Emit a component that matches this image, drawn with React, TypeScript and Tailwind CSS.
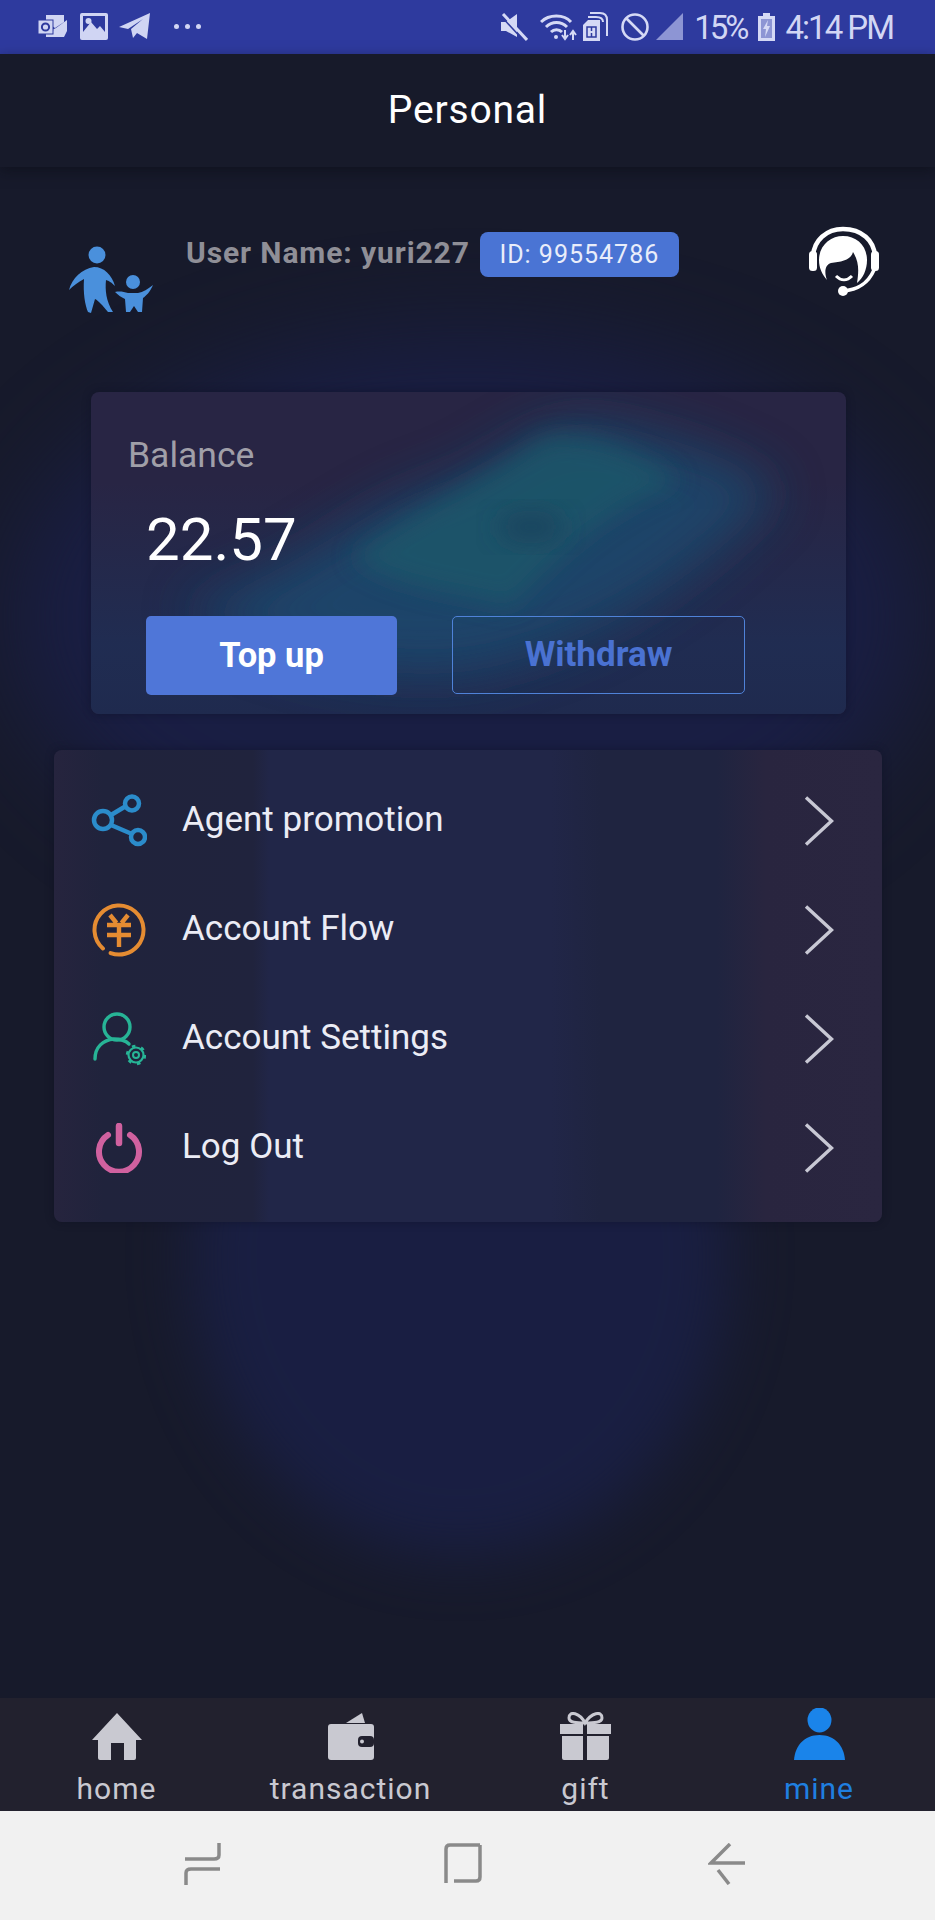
import React from "react";

const Chevron = () => (
  <svg width="30" height="50" viewBox="0 0 30 50" fill="none" stroke="#c8c8d4" strokeWidth="3.4">
    <path d="M2 1.5 L27.5 25 L2 48.5" />
  </svg>
);

const ShareIcon = () => (
  <svg width="56" height="54" viewBox="0 0 56 54" fill="none" stroke="#2b8ccb" strokeWidth="4.5">
    <circle cx="12" cy="26" r="9" />
    <circle cx="41" cy="9.5" r="7" />
    <circle cx="47" cy="43" r="7" />
    <path d="M20 21 L35 12 M20 31 L41 40" />
  </svg>
);

const YenIcon = () => (
  <svg width="54" height="54" viewBox="0 0 54 54" fill="none" stroke="#e58c32" strokeWidth="4">
    <circle cx="27" cy="27" r="24.5" strokeDasharray="144 10" transform="rotate(131 27 27)" strokeLinecap="round" />
    <path d="M18 12 L24.5 20 M36 12 L29.5 20 M15 22 H39 M15 32 H39 M27 22 V44" strokeWidth="4.4" />
  </svg>
);

const UserGearIcon = () => (
  <svg width="54" height="54" viewBox="0 0 54 54" fill="none" stroke="#27b496" strokeWidth="3.4">
    <circle cx="25" cy="15" r="13" />
    <path d="M3 47 C3 35 11 28 22 27 C28 27 33 28 37 32" strokeLinecap="round" />
    <circle cx="44" cy="43" r="7.5" strokeWidth="2.2" />
    <circle cx="44" cy="43" r="9" strokeWidth="2.4" strokeDasharray="3.5 6" />
    <circle cx="44" cy="43" r="3" strokeWidth="2" />
  </svg>
);

const PowerIcon = () => (
  <svg width="48" height="50" viewBox="0 0 48 50" fill="none" stroke="#d0619f" strokeWidth="6">
    <path d="M13 12 A20 20 0 1 0 35 12" strokeLinecap="round" />
    <path d="M24 3 V20" strokeWidth="6.5" strokeLinecap="round" />
  </svg>
);

const Family = () => (
  <svg width="86" height="70" viewBox="0 0 86 70" fill="#4a90dc">
    <circle cx="29" cy="10" r="8.5" />
    <path d="M1 45 C4 33 14 24 26 22 C36 22 44 30 47 41 C43 37 41 36 38 35 C37 45 38 56 45 67 L40 67 C34 60 31 56 27 54 L23 68 L20 67 C17 60 15 48 16 34 C10 37 5 41 1 45 Z" />
    <circle cx="65" cy="37" r="7" />
    <path d="M47 47 C52 46 56 47 60 48 L70 48 C75 47 80 44 85 40 C82 47 78 51 75 53 L74 67 L70 67 L66 61 L62 67 L58 67 L57 54 C53 52 50 50 47 47 Z" />
  </svg>
);

const Support = () => (
  <svg width="72" height="72" viewBox="17 16 72 72" fill="none">
    <path d="M22 48 C22 30 36 19 52 19 C70 19 84 30 84 48" stroke="#fff" strokeWidth="4.5" />
    <rect x="18" y="41" width="8" height="20" rx="3.5" fill="#fff" />
    <rect x="80" y="41" width="8" height="20" rx="3.5" fill="#fff" />
    <path d="M28 50 C28 35 40 26 52 26 C66 26 76 36 76 50 C76 60 72 68 66 73 C68 60 68 52 62 42 C60 50 50 52 40 53 C34 55 33 62 36 70 C31 64 28 58 28 50 Z" fill="#fff" />
    <path d="M45 66 C50 71 56 71 61 66" stroke="#fff" strokeWidth="3" />
    <path d="M83 60 C76 76 64 80 52 81" stroke="#fff" strokeWidth="3.5" />
    <circle cx="52" cy="81" r="5" fill="#fff" />
  </svg>
);

const BarIcons = {
  outlook: (
    <svg width="31" height="24" viewBox="0 0 31 24">
      <path d="M9 1 H27 V8 L18 14 L9 8 Z M15 16 L19 17 L25 13 L30 17 V6 L19 14 Z" fill="#d0d5f3" />
      <path d="M14 17 L19 15.5 L27 9 L30 7 V17 L27 23 H9 V20 H14 Z" fill="#d0d5f3" />
      <rect x="1" y="6" width="15" height="14" fill="#d0d5f3" stroke="#2e3a9e" strokeWidth="1" />
      <circle cx="8.5" cy="13" r="3.6" fill="none" stroke="#2e3a9e" strokeWidth="2" />
    </svg>
  ),
  image: (
    <svg width="28" height="27" viewBox="0 0 28 27">
      <rect width="28" height="27" rx="2" fill="#d0d5f3" />
      <rect x="3" y="3" width="22" height="21" fill="#2e3a9e" />
      <path d="M3 24 V19 L11 9 L17 16 L20 13 L25 19 V24 Z" fill="#d0d5f3" />
      <circle cx="8.5" cy="8" r="3" fill="#d0d5f3" />
    </svg>
  ),
  telegram: (
    <svg width="32" height="28" viewBox="0 0 32 28" fill="#d0d5f3">
      <path d="M0 15 L31 1 L28 27 L18 21 L14 26 L12 17 L24 7 L9 17 Z" />
    </svg>
  ),
  mute: (
    <svg width="28" height="28" viewBox="0 0 28 28" fill="#d5d9f5">
      <path d="M1 9 H6 L17 1 V24 L6 18 H1 Z" />
      <path d="M3 1 L27 27" stroke="#d5d9f5" strokeWidth="3" />
      <path d="M0 2 L24 28" stroke="#2e3a9e" strokeWidth="1.5" />
    </svg>
  ),
  wifi: (
    <svg width="38" height="28" viewBox="0 0 38 28" fill="none" stroke="#d5d9f5" strokeWidth="3">
      <path d="M1 9 C9 1 24 1 31 9 M6 14 C12 8 21 8 27 14 M11 19 C14 16 19 16 22 19" />
      <circle cx="16" cy="24" r="2" fill="#d5d9f5" stroke="none" />
      <path d="M25 17 V25 M22 22 L25 26 L28 22 M33 27 V19 M30 22 L33 18 L36 22" strokeWidth="2" />
    </svg>
  ),
  sim: (
    <svg width="26" height="30" viewBox="0 0 26 30" fill="#d5d9f5">
      <path d="M8 1 H18 C23 1 25 4 25 8 V24" fill="none" stroke="#d5d9f5" strokeWidth="2" />
      <path d="M6 5 H14 C19 5 21 7 21 10" fill="none" stroke="#d5d9f5" strokeWidth="2" />
      <path d="M6 8 H18 V29 H1 V13 Z" />
      <rect x="5" y="15" width="9" height="10" fill="none" stroke="#2e3a9e" strokeWidth="1.5" />
      <path d="M9.5 15 V19 M9.5 21 V25" stroke="#2e3a9e" strokeWidth="1.5" />
    </svg>
  ),
  ban: (
    <svg width="28" height="28" viewBox="0 0 28 28" fill="none" stroke="#d5d9f5" strokeWidth="2.6">
      <circle cx="14" cy="14" r="12.5" />
      <path d="M5 5 L23 23" />
    </svg>
  ),
  signal: (
    <svg width="27" height="28" viewBox="0 0 27 28">
      <path d="M0 27 L27 0 V27 Z" fill="#8d95d4" />
    </svg>
  ),
  battery: (
    <svg width="19" height="28" viewBox="0 0 19 28">
      <path d="M6 0 H13 V3 H18 V28 H1 V3 H6 Z" fill="#d5d9f5" />
      <path d="M4 6 H15 V25 H4 Z" fill="#8d95d4" />
      <path d="M11 7 L6 16 H9 L8 24 L13 13 H10 Z" fill="#d5d9f5" />
    </svg>
  ),
};

const menu = [
  { label: "Agent promotion", icon: <ShareIcon /> },
  { label: "Account Flow", icon: <YenIcon /> },
  { label: "Account Settings", icon: <UserGearIcon /> },
  { label: "Log Out", icon: <PowerIcon /> },
];

const HomeIcon = () => (
  <svg width="50" height="47" viewBox="0 0 50 47" fill="#c9c9d1">
    <path d="M25 0 L50 27 L44 27 V45 Q44 47 42 47 H32 V30 H19 V47 H8 Q6 47 6 45 V27 H0 Z" />
  </svg>
);
const WalletIcon = () => (
  <svg width="46" height="47" viewBox="0 0 46 47">
    <path d="M18 10 L34 0 L37 10 Z" fill="#c9c9d1" />
    <rect y="11" width="46" height="36" rx="3" fill="#c9c9d1" />
    <rect x="30" y="23" width="16" height="11" rx="4" fill="#22212e" />
    <circle cx="34" cy="28.5" r="2" fill="#c9c9d1" />
  </svg>
);
const GiftIcon = () => (
  <svg width="51" height="48" viewBox="0 0 51 48" fill="#c9c9d1">
    <path d="M25 11 C20 1 9 -2 9 6 C9 11 17 11 25 11 C33 11 42 11 42 6 C42 -2 31 1 25 11 Z" fill="none" stroke="#c9c9d1" strokeWidth="3" />
    <path d="M0 12 H23 V22 H0 Z M27 12 H51 V22 H27 Z" />
    <path d="M2 24 H23 V48 H4 Q2 48 2 46 Z M27 24 H49 V46 Q49 48 47 48 H27 Z" />
  </svg>
);
const MineIcon = () => (
  <svg width="51" height="52" viewBox="0 0 51 52" fill="#1a84ea">
    <ellipse cx="25.5" cy="12" rx="12" ry="12.5" />
    <path d="M0 52 C1 38 10 27 25.5 27 C41 27 50 38 51 52 Z" />
  </svg>
);

const nav = [
  { label: "home", icon: <HomeIcon />, active: false },
  { label: "transaction", icon: <WalletIcon />, active: false },
  { label: "gift", icon: <GiftIcon />, active: false },
  { label: "mine", icon: <MineIcon />, active: true },
];

export default function App() {
  return (
    <div className="w-[935px] h-[1920px] flex flex-col overflow-hidden bg-[#171a2b] font-[family-name:Roboto,sans-serif]">
      <div className="h-[54px] shrink-0 bg-[#2e3a9e] flex items-center text-[#d2d6f4]">
        <div className="ml-[37px] mt-[-2px] flex items-center">
          {BarIcons.outlook}
          <div className="ml-[12px]">{BarIcons.image}</div>
          <div className="ml-[11px]">{BarIcons.telegram}</div>
          <div className="ml-[23px] flex gap-[6px]">
            <span className="w-[5px] h-[5px] rounded-full bg-[#d2d6f4]" />
            <span className="w-[5px] h-[5px] rounded-full bg-[#d2d6f4]" />
            <span className="w-[5px] h-[5px] rounded-full bg-[#d2d6f4]" />
          </div>
        </div>
        <div className="ml-auto mr-[42px] flex items-center">
          {BarIcons.mute}
          <div className="ml-[12px]">{BarIcons.wifi}</div>
          <div className="ml-[4px]">{BarIcons.sim}</div>
          <div className="ml-[13px]">{BarIcons.ban}</div>
          <div className="ml-[7px]">{BarIcons.signal}</div>
          <span className="ml-[11px] text-[33px] leading-none tracking-[-3px]">15%</span>
          <div className="ml-[10px]">{BarIcons.battery}</div>
          <span className="ml-[10px] text-[33px] leading-none tracking-[-2px]">4:14 PM</span>
        </div>
      </div>

      <div className="relative z-10 h-[113px] shrink-0 bg-[#171a2a] flex items-center justify-center text-white text-[39px] tracking-[0.8px] shadow-[0_4px_12px_rgba(10,12,20,0.5)]">
        Personal
      </div>

      <main className="relative flex-1 overflow-hidden">
        <div className="absolute left-[190px] top-[790px] w-[540px] h-[600px] rounded-[50%] bg-[#1a2048] blur-[30px] opacity-80" />
        <div className="absolute left-[10px] top-[170px] w-[915px] h-[560px] rounded-[50%] bg-[#1a1f4a] blur-[50px] opacity-80" />

        <div className="relative flex items-start pl-[68px] pr-[55px] pt-[59px]">
          <div className="mt-[19px]"><Family /></div>
          <div className="ml-[32px] flex items-center gap-[10px] mt-[6px]">
            <span className="mt-[-4px] text-[30px] font-bold tracking-[0.9px] text-[#8f8f97]">User Name: yuri227</span>
            <span className="h-[45px] w-[199px] rounded-[8px] bg-[#4a74d4] text-[#e9edfa] text-[25px] tracking-[1px] flex items-center justify-center">ID: 99554786</span>
          </div>
          <div className="ml-auto"><Support /></div>
        </div>

        <section className="relative overflow-hidden ml-[91px] mt-[77px] w-[755px] h-[322px] rounded-[8px] bg-[#282544] shadow-[0_0_8px_rgba(10,12,30,0.4)]">
          <svg className="absolute inset-0" width="755" height="322" viewBox="0 0 755 322" fill="none">
            <defs>
              <filter id="b1" x="-30%" y="-30%" width="160%" height="160%"><feGaussianBlur stdDeviation="26" /></filter>
              <filter id="b2" x="-30%" y="-30%" width="160%" height="160%"><feGaussianBlur stdDeviation="12" /></filter>
              <linearGradient id="bot" x1="0" y1="0" x2="0" y2="1"><stop offset="0" stopColor="#1e2e55" stopOpacity="0" /><stop offset="0.7" stopColor="#1e2e55" stopOpacity="0.8" /><stop offset="1" stopColor="#1f2a4e" /></linearGradient>
            </defs>
            <rect y="90" width="755" height="232" fill="url(#bot)" />
            <path d="M90 215 C200 190 260 120 340 95 C400 80 440 25 500 30 C570 40 660 70 690 100 C620 170 530 250 380 280 C280 290 170 265 90 215 Z" fill="#1c4a6e" filter="url(#b1)" opacity="0.85" />
            <path d="M260 165 C330 110 400 85 450 45 C500 35 560 65 590 90 C530 115 490 140 420 215 C370 200 310 200 260 165 Z" fill="#1c5a6a" filter="url(#b2)" opacity="0.7" />
            <ellipse cx="440" cy="135" rx="34" ry="17" fill="#1e3f5c" filter="url(#b2)" opacity="0.7" />
          </svg>
          <div className="relative pl-[37px] pt-[40px] text-[35.5px] leading-[46px] text-[#a09fa8]">Balance</div>
          <div className="relative pl-[55px] mt-[27px] text-[60px] leading-[70px] text-white">22.57</div>
          <div className="relative flex pl-[55px] mt-[41px]">
            <button className="w-[251px] h-[79px] rounded-[5px] bg-[#4f76d8] text-white text-[34.5px] font-bold">Top up</button>
            <button className="ml-[55px] w-[293px] h-[78px] rounded-[5px] border-[1.5px] border-[#4f82d8] text-[#4a72d2] text-[35px] font-bold">Withdraw</button>
          </div>
        </section>

        <section className="relative ml-[54px] mt-[36px] w-[828px] h-[472px] rounded-[8px] py-[16px] bg-[linear-gradient(90deg,#26243e_0%,#20233c_6%,#20233d_24%,#212648_26%,#212648_60%,#1f2440_66%,#1f2440_80%,#29253f_86%,#2a2640_100%)] shadow-[0_0_8px_rgba(10,12,30,0.4)]">
          {menu.map((m) => (
            <div key={m.label} className="h-[109px] flex items-center">
              <div className="ml-[36px] w-[58px] flex justify-center">{m.icon}</div>
              <span className="ml-[34px] text-[35px] text-[#ebecf5]">{m.label}</span>
              <div className="ml-auto mr-[48px]"><Chevron /></div>
            </div>
          ))}
        </section>
      </main>

      <nav className="h-[113px] shrink-0 bg-[#22212e] grid grid-cols-[233px_235px_235px_232px]">
        {nav.map((n) => (
          <div key={n.label} className="flex flex-col items-center">
            <div className="h-[71px] flex items-end pb-[9px]">{n.icon}</div>
            <span className={`text-[30px] leading-[40px] tracking-[1px] ${n.active ? "text-[#1f7fe0]" : "text-[#c9c9d1]"}`}>{n.label}</span>
          </div>
        ))}
      </nav>

      <div className="h-[109px] shrink-0 bg-[#f1f1f1] flex items-start">
        <svg className="ml-[184px] mt-[32px]" width="38" height="42" viewBox="0 0 38 42" fill="none" stroke="#8a8a8a" strokeWidth="3.5">
          <path d="M1 16 H30 Q35 16 35 12 V0" />
          <path d="M36 26 H7 Q2 26 2 30 V42" />
        </svg>
        <svg className="ml-[222px] mt-[32px]" width="38" height="42" viewBox="0 0 38 42" fill="none" stroke="#8a8a8a" strokeWidth="3.5">
          <path d="M2 40 V6 Q2 2 6 2 H36" />
          <path d="M36 2 V34 Q36 38 32 38 H10" />
        </svg>
        <svg className="ml-[226px] mt-[32px]" width="38" height="42" viewBox="0 0 38 42" fill="none" stroke="#8a8a8a" strokeWidth="3.5">
          <path d="M22 1 L3 20 H37" />
          <path d="M10 27 L21 41" />
        </svg>
      </div>
    </div>
  );
}
